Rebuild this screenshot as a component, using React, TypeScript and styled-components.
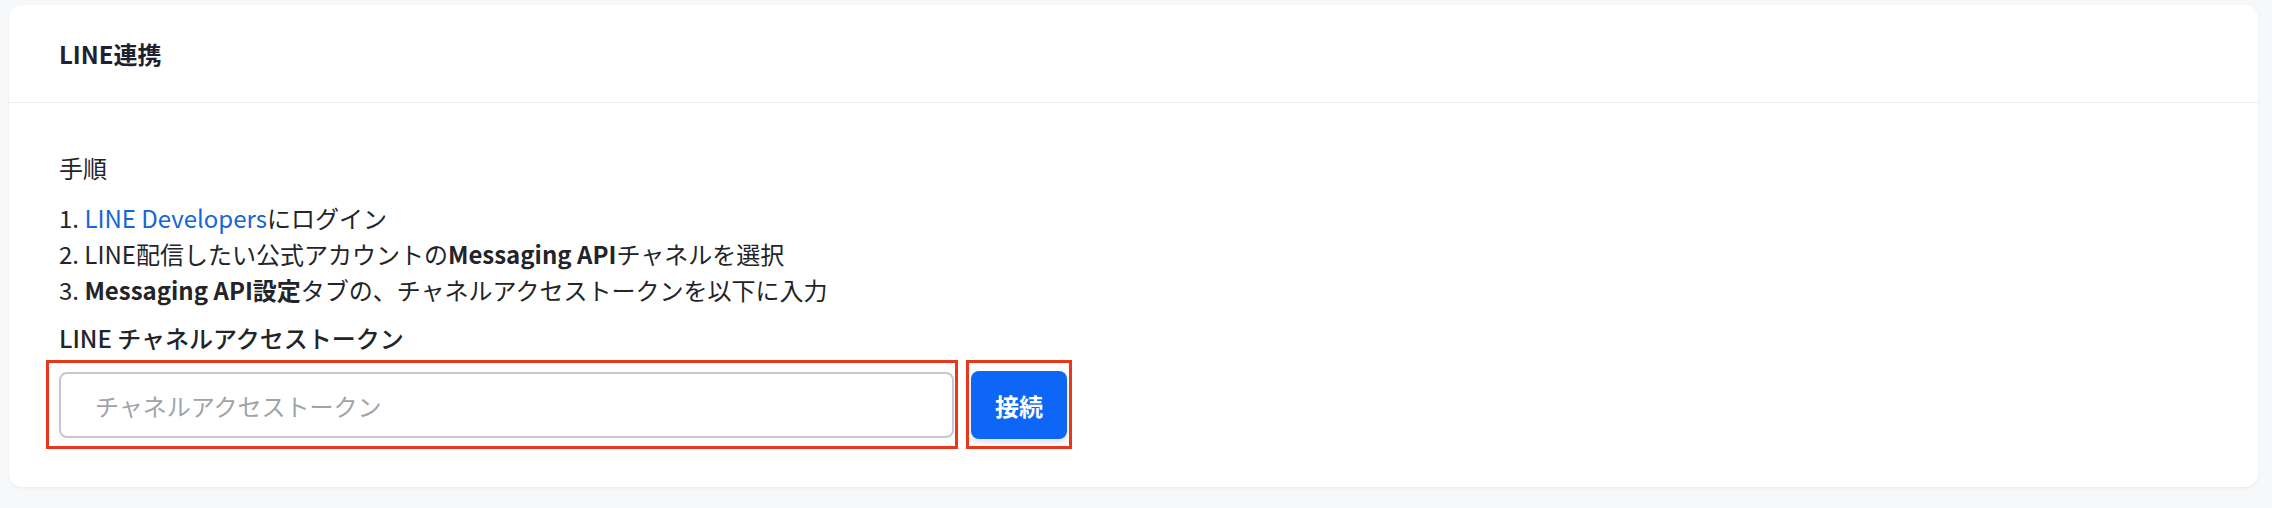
import React from 'react';
import styled, { createGlobalStyle } from 'styled-components';

const GlobalStyle = createGlobalStyle`
  html, body {
    margin: 0;
    padding: 0;
    background: #f7f8fa;
  }

  body {
    font-family: 'Noto Sans CJK JP', 'Noto Sans', sans-serif;
    color: #222429;
  }
`;

const LineSettings = () => {
  return (
    <Page>
      <Card>
        <CardHeader>
          <CardTitle>LINE連携</CardTitle>
        </CardHeader>

        <CardBody>
          <StepsTitle>手順</StepsTitle>
          <StepList>
            <li>
              1. <StepLink href='#'>LINE Developers</StepLink>にログイン
            </li>
            <li>
              2. LINE配信したい公式アカウントの<b>Messaging API</b>チャネルを選択
            </li>
            <li>
              3. <b>Messaging API設定</b>タブの、チャネルアクセストークンを以下に入力
            </li>
          </StepList>

          <FieldLabel htmlFor='lineToken'>LINE チャネルアクセストークン</FieldLabel>
          <FieldRow>
            <Marked $top={12} $left={13} $right={4} $bottom={11} $grow>
              <TokenInput id='lineToken' type='text' placeholder='チャネルアクセストークン' />
            </Marked>
            <Marked $top={11} $left={5} $right={5} $bottom={10}>
              <ConnectButton type='button'>接続</ConnectButton>
            </Marked>
          </FieldRow>
        </CardBody>
      </Card>
    </Page>
  );
};

const App = () => (
  <>
    <GlobalStyle />
    <LineSettings />
  </>
);

export default App;

const Page = styled.div`
  padding: 5px 14px 20px 9px;
`;

const Card = styled.section`
  background: #fff;
  border-radius: 13px;
  box-shadow: 0 1px 3px rgba(20, 24, 40, 0.06);
`;

const CardHeader = styled.div`
  height: 98px;
  display: flex;
  align-items: center;
  padding: 0 50px;
  border-bottom: 1px solid #ececef;
  box-sizing: border-box;
`;

const CardTitle = styled.h2`
  margin: 0;
  font-size: 24px;
  font-weight: 700;
  line-height: 36px;
  color: #1d2130;
`;

const CardBody = styled.div`
  padding: 47px 50px 48px;
  font-size: 24px;
  line-height: 36px;
`;

const StepsTitle = styled.div`
  font-weight: 400;
  margin-bottom: 14px;
`;

const StepList = styled.ul`
  list-style: none;
  margin: 0 0 12px;
  padding: 0;

  b {
    font-weight: 700;
  }
`;

const StepLink = styled.a`
  color: #1565d8;
  text-decoration: none;
`;

const FieldLabel = styled.label`
  display: block;
  font-weight: 500;
  margin-bottom: 15px;
`;

const FieldRow = styled.div`
  display: flex;
  align-items: center;
  gap: 17px;
  width: 1008px;
`;

const Marked = styled.div<{ $top: number; $left: number; $right: number; $bottom: number; $grow?: boolean }>`
  position: relative;
  display: flex;
  flex: ${({ $grow }) => ($grow ? '1' : 'none')};

  &::after {
    content: '';
    position: absolute;
    top: -${({ $top }) => $top}px;
    left: -${({ $left }) => $left}px;
    right: -${({ $right }) => $right}px;
    bottom: -${({ $bottom }) => $bottom}px;
    border: 3px solid #e8381c;
    pointer-events: none;
  }
`;

const TokenInput = styled.input`
  flex: 1;
  height: 66px;
  box-sizing: border-box;
  padding: 0 34px;
  border: 2px solid #c6c8ce;
  border-radius: 8px;
  font-family: inherit;
  font-size: 24px;
  color: #222429;
  outline: none;

  &::placeholder {
    color: #a0a3a9;
  }
`;

const ConnectButton = styled.button`
  width: 96px;
  height: 68px;
  border: none;
  border-radius: 8px;
  background: #0d66f6;
  color: #fff;
  font-family: inherit;
  font-size: 24px;
  font-weight: 700;
  box-shadow: 0 3px 6px rgba(13, 40, 90, 0.15);
  cursor: pointer;
`;
